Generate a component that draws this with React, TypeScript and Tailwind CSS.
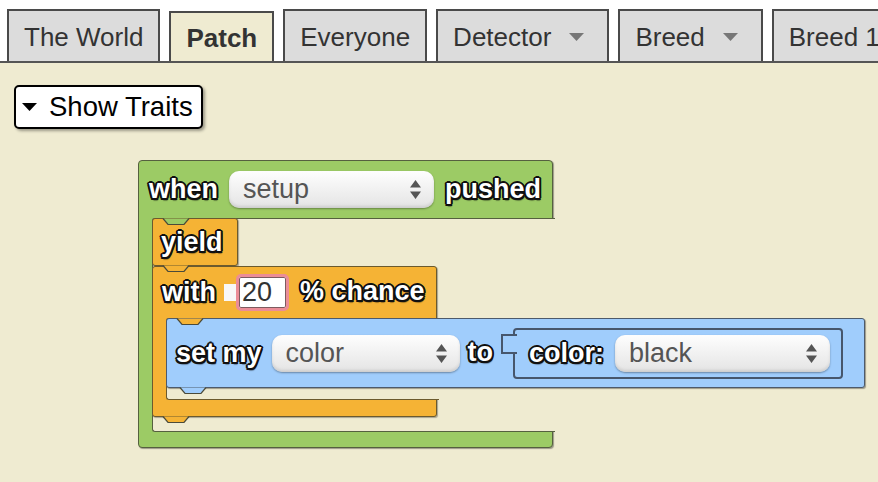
import React from "react"

const FONT = "font-['Liberation_Sans',Arial,sans-serif]"

// white label with the heavy black outline the block editor uses
const LABEL =
  "text-white font-bold text-[27px] leading-none whitespace-nowrap [text-shadow:0_0_1px_#000,-2px_0_0_#111,2px_0_0_#111,0_-2px_0_#111,0_2px_0_#111,-1.5px_-1.5px_0_#111,1.5px_-1.5px_0_#111,-1.5px_1.5px_0_#111,1.5px_1.5px_0_#111,1px_3px_1px_rgba(0,0,0,0.35)]"

const GREEN = "bg-[#9ccb65]"
const YELLOW = "bg-[#f5b335]"
const BLUE = "bg-[#a0cdfc]"
const CREAM = "bg-[#efebd1]"

function Label({ children }: { children: React.ReactNode }) {
  return <span className={LABEL}>{children}</span>
}

function Notch({ fill, className }: { fill: string; className: string }) {
  return (
    <svg
      className={"absolute top-full z-10 overflow-visible " + className}
      width="26"
      height="8"
      viewBox="0 0 26 8"
    >
      <path d="M0 0.5 L5 6.5 L21 6.5 L26 0.5 Z" fill={fill} />
      <path d="M0 0.5 L5 6.5 L21 6.5 L26 0.5" fill="none" stroke="#4a4a3a" strokeWidth="1.2" />
    </svg>
  )
}

function Arrows() {
  return (
    <svg width="11" height="19" viewBox="0 0 11 19" className="shrink-0">
      <path d="M5.5 0 L11 7.5 L0 7.5 Z M0 11.5 L11 11.5 L5.5 19 Z" fill="#555" />
    </svg>
  )
}

function Dropdown({ label, width }: { label: string; width: string }) {
  return (
    <div
      className={
        "flex h-[37px] shrink-0 items-center justify-between rounded-[10px] bg-[linear-gradient(#fefefe,#e4e4e4)] pl-[14px] pr-[13px] shadow-[inset_0_-2px_3px_rgba(0,0,0,0.1),0_1px_2px_rgba(0,0,0,0.35)] " +
        width
      }
    >
      <span className="text-[27px] leading-none text-[#555]">{label}</span>
      <Arrows />
    </div>
  )
}

function Tab({ label, active, menu }: { label: string; active?: boolean; menu?: boolean }) {
  return (
    <div
      className={
        "flex shrink-0 items-center border-2 border-b-0 border-[#4a4a4a] px-[15px] pt-[2px] text-[26px] leading-none text-[#333] whitespace-nowrap " +
        (active ? "h-[50px] bg-[#efebd1] font-bold" : "h-[52px] bg-[#dcdcdc]")
      }
    >
      <span>{label}</span>
      {menu && (
        <svg width="15" height="8" viewBox="0 0 15 8" className="ml-[18px] mr-[8px]">
          <path d="M0 0H15L7.5 8Z" fill="#777" />
        </svg>
      )}
    </div>
  )
}

export default function App() {
  return (
    <div className={"flex h-[482px] w-[878px] flex-col overflow-hidden bg-white " + FONT}>
      {/* tab strip */}
      <div className="flex shrink-0 items-end gap-[9px] border-b-2 border-[#555] pl-[7px] pt-[9px]">
        <Tab label="The World" />
        <Tab label="Patch" active />
        <Tab label="Everyone" />
        <Tab label="Detector" menu />
        <Tab label="Breed" menu />
        <Tab label="Breed 1" />
      </div>

      <div className={"flex flex-1 flex-col items-start " + CREAM}>
        <button className="ml-[14px] mt-[22px] flex h-[44px] items-center rounded-[5px] border-2 border-black bg-white pl-[6px] pr-[8px] shadow-[2px_2px_3px_rgba(0,0,0,0.35)]">
          <svg width="15" height="8" viewBox="0 0 15 8">
            <path d="M0 0H15L7.5 8Z" fill="#000" />
          </svg>
          <span className="ml-[12px] text-[27.5px] leading-none text-black">Show Traits</span>
        </button>

        {/* when setup pushed */}
        <div
          className={
            "relative ml-[138px] mt-[31px] flex w-[415px] flex-col rounded-[4px] border border-[#55603f] shadow-[1px_1px_1px_rgba(0,0,0,0.35)] " +
            GREEN
          }
        >
          <div className="relative flex h-[57px] items-center gap-[11px] pl-[10px]">
            <Label>when</Label>
            <Dropdown label="setup" width="w-[205px]" />
            <Label>pushed</Label>
            <Notch fill="#9ccb65" className="left-[24px]" />
          </div>

          <div className="flex">
            <div className="w-[13px] shrink-0" />
            <div
              className={
                "-mr-[3px] flex min-w-0 flex-1 flex-col items-start rounded-l-[3px] border-y border-l border-[#55603f] pb-[14px] " +
                CREAM
              }
            >
              {/* yield */}
              <div
                className={
                  "relative -ml-px -mt-px flex h-[48px] w-[86px] items-center rounded-[3px] border border-[#6b5a2e] pl-[8px] shadow-[1px_1px_1px_rgba(0,0,0,0.3)] " +
                  YELLOW
                }
              >
                <Label>yield</Label>
                <Notch fill="#f5b335" className="left-[10px]" />
              </div>

              {/* with 20 % chance */}
              <div
                className={
                  "relative -ml-px flex w-[285px] flex-col rounded-[3px] border border-[#6b5a2e] shadow-[1px_1px_1px_rgba(0,0,0,0.3)] " +
                  YELLOW
                }
              >
                <div className="relative flex h-[51px] items-center pl-[9px]">
                  <Label>with</Label>
                  <div className="ml-[8px] h-[17px] w-[14px] bg-[#f8f8f8]" />
                  <div className="-ml-[2px] flex h-[37px] w-[53px] items-center rounded-[5px] border-[3px] border-[#eb8d97] bg-white pl-[3px] shadow-[inset_0_0_0_1px_#7d5b5f]">
                    <span className="text-[27px] leading-none text-[#333]">20</span>
                  </div>
                  <span className="ml-[11px]">
                    <Label>% chance</Label>
                  </span>
                  <Notch fill="#f5b335" className="left-[24px]" />
                </div>

                <div className="flex">
                  <div className="w-[13px] shrink-0" />
                  <div
                    className={
                      "-mr-[3px] flex min-w-0 flex-1 flex-col items-start rounded-l-[3px] border-y border-l border-[#6b5a2e] pb-[11px] " +
                      CREAM
                    }
                  >
                    {/* set my color to color: black */}
                    <div
                      className={
                        "relative -ml-px -mt-px flex h-[70px] w-max items-center rounded-[3px] border border-[#4d5a6b] pl-[9px] pr-[21px] shadow-[1px_1px_1px_rgba(0,0,0,0.35)] " +
                        BLUE
                      }
                    >
                      <Label>set my</Label>
                      <div className="ml-[10px]">
                        <Dropdown label="color" width="w-[188px]" />
                      </div>
                      <span className="ml-[8px]">
                        <Label>to</Label>
                      </span>
                      <div
                        className={
                          "relative ml-[20px] flex h-[51px] items-center rounded-[4px] border-2 border-[#46566c] pl-[14px] pr-[11px] " +
                          BLUE
                        }
                      >
                        <div
                          className={
                            "absolute -left-[14px] top-[4px] h-[20px] w-[16px] border-2 border-r-0 border-[#46566c] " +
                            BLUE
                          }
                        />
                        <Label>color:</Label>
                        <div className="ml-[11px]">
                          <Dropdown label="black" width="w-[215px]" />
                        </div>
                      </div>
                      <Notch fill="#a0cdfc" className="left-[13px]" />
                    </div>
                  </div>
                </div>

                <div className="relative h-[16px]">
                  <Notch fill="#f5b335" className="left-[10px]" />
                </div>
              </div>
            </div>
          </div>

          <div className="h-[15px]" />
        </div>
      </div>
    </div>
  )
}
